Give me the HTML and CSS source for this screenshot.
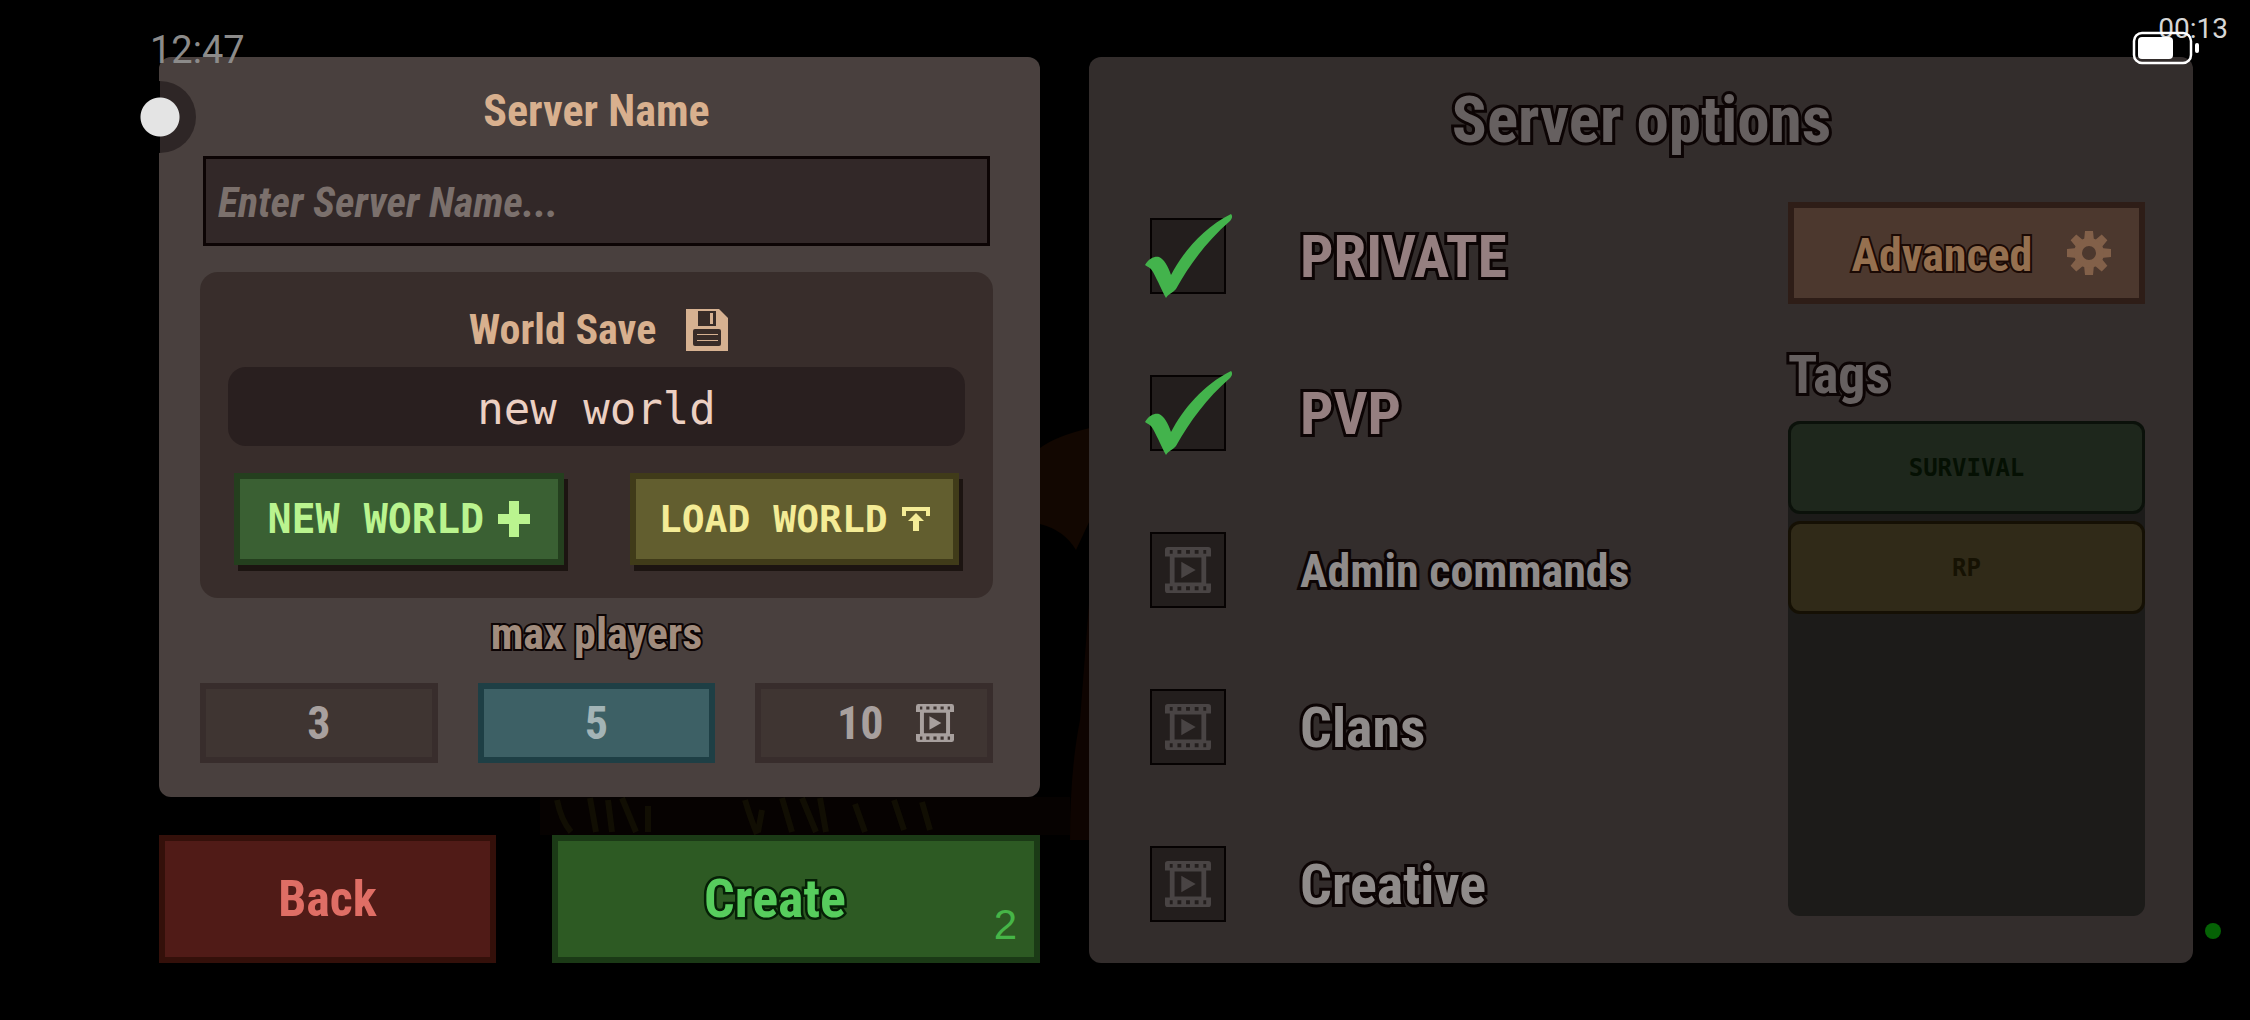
FILE: index.html
```html
<!DOCTYPE html>
<html lang="en">
<head>
  <meta charset="UTF-8">
  <title>Create Server</title>
  <link rel="stylesheet" href="styles.css">
</head>
<body>
  <svg class="symbols" width="0" height="0" aria-hidden="true">
    <symbol id="film" viewBox="0 0 48 48">
      <path fill="currentColor" fill-rule="evenodd" d="M3 0h42a3 3 0 0 1 3 3v7h-5v28h5v7a3 3 0 0 1-3 3H3a3 3 0 0 1-3-3v-7h5V10H0V3a3 3 0 0 1 3-3zM10 11v26h28V11zM5 3v4h3V3zM13 3v4h4V3zM22 3v4h4V3zM31 3v4h4V3zM40 3v4h3V3zM5 41v4h3v-4zM13 41v4h4v-4zM22 41v4h4v-4zM31 41v4h4v-4zM40 41v4h3v-4z"/>
      <path fill="currentColor" d="M17 15.500L32 24 17 32.500z"/>
    </symbol>
    <symbol id="check" viewBox="0 0 88 84">
      <path fill="#43b34c" d="M0 51C4 44 10 42 14 43C19 45 23 52 26 61C38 38 58 14 86 0C88 2 87 5 85 7C62 27 45 50 31 75C28 79 23 80 21 84C17 77 13 67 8 58C6 54 3 53 0 51z"/>
    </symbol>
  </svg>

  <svg class="scene" viewBox="0 0 2250 1020" preserveAspectRatio="none" aria-hidden="true">
    <path fill="#120701" d="M1040 448Q1056 436 1090 428V520L1076 550Q1064 530 1040 524z"/>
    <path fill="#0e0401" d="M1090 590V840H1070Q1070 770 1080 720z"/>
    <path fill="#060201" d="M540 797H1070V835H540z"/>
    <g fill="none" stroke="#110e03" stroke-width="6">
      <path d="M557 800q4 20 14 32M590 798l6 34M608 800l4 32M622 798l14 34M648 806v26"/>
      <path d="M745 800q6 20 12 34M762 810l-4 22M782 798l10 34M802 798l14 34M820 798l6 34M855 804l10 28M894 800l10 30M922 802l8 28"/>
    </g>
  </svg>

  <div class="screen">
    <div class="left">
      <section class="card server">
        <label class="title" for="server-name">Server Name</label>
        <input class="name-input" id="server-name" type="text" placeholder="Enter Server Name...">

        <div class="world">
          <div class="title world-title">
            World Save
            <svg class="disk" viewBox="0 0 42 42" aria-hidden="true">
              <path fill="#d6b191" d="M0 0H33L42 9V42H0z"/>
              <path fill="#382c28" fill-rule="evenodd" d="M12 2H30V17H12zM24 4V15H27V4z"/>
              <rect x="7" y="20" width="28" height="17" rx="2" fill="#382c28"/>
              <path stroke="#d6b191" stroke-width="1" d="M11 25.500H32M11 31.500H32"/>
            </svg>
          </div>
          <div class="slot">new world</div>
          <div class="world-buttons">
            <button class="btn new" type="button">NEW WORLD
              <svg width="32" height="36" viewBox="0 0 32 36" aria-hidden="true"><path fill="currentColor" d="M11 0H21V13H32V23H21V36H11V23H0V13H11z"/></svg>
            </button>
            <button class="btn load" type="button">LOAD WORLD
              <svg width="28" height="24" viewBox="0 0 28 24" aria-hidden="true"><path fill="currentColor" d="M0 0H28V9H24V4H4V9H0zM14 6L22 14H17V24H11V14H6z"/></svg>
            </button>
          </div>
        </div>

        <fieldset class="players">
          <legend class="outlined">max players</legend>
          <div class="player-row">
            <label class="player"><input type="radio" name="players" value="3"><span>3</span></label>
            <label class="player"><input type="radio" name="players" value="5" checked><span>5</span></label>
            <label class="player locked"><input type="radio" name="players" value="10"><span>10</span><svg class="film" aria-hidden="true"><use href="#film"/></svg></label>
          </div>
        </fieldset>
      </section>

      <div class="actions">
        <button class="btn back" type="button">Back</button>
        <button class="btn create" type="button"><span class="outlined">Create</span><span class="count">2</span></button>
      </div>
    </div>

    <section class="card options">
      <h1 class="outlined">Server options</h1>
      <div class="options-body">
        <div class="checks">
          <label class="check on"><span class="box"><input type="checkbox" checked><svg class="tick" aria-hidden="true"><use href="#check"/></svg></span><span class="outlined">PRIVATE</span></label>
          <label class="check on"><span class="box"><input type="checkbox" checked><svg class="tick" aria-hidden="true"><use href="#check"/></svg></span><span class="outlined">PVP</span></label>
          <label class="check small"><span class="box"><input type="checkbox"><svg class="film" aria-hidden="true"><use href="#film"/></svg></span><span class="outlined">Admin commands</span></label>
          <label class="check"><span class="box"><input type="checkbox"><svg class="film" aria-hidden="true"><use href="#film"/></svg></span><span class="outlined">Clans</span></label>
          <label class="check"><span class="box"><input type="checkbox"><svg class="film" aria-hidden="true"><use href="#film"/></svg></span><span class="outlined">Creative</span></label>
        </div>
        <div class="side">
          <button class="btn advanced" type="button"><span class="outlined">Advanced</span>
            <svg width="44" height="44" viewBox="-22 -22 44 44" aria-hidden="true">
              <g fill="#826049">
                <path id="teeth" d="M-4-22H4L5-12H-5zM-4 22H4L5 12H-5zM-22-4V4L-12 5V-5zM22-4V4L12 5V-5z"/>
                <use href="#teeth" transform="rotate(45)"/>
              </g>
              <circle r="11" fill="none" stroke="#826049" stroke-width="8"/>
            </svg>
          </button>
          <h2 class="outlined">Tags</h2>
          <div class="tags">
            <button class="tag survival" type="button">SURVIVAL</button>
            <button class="tag rp" type="button">RP</button>
          </div>
        </div>
      </div>
    </section>
  </div>

  <!-- phone overlay -->
  <div class="clock">12:47</div>
  <div class="touch"></div>
  <div class="timer">00:13</div>
  <svg class="battery" viewBox="0 0 68 34" aria-hidden="true">
    <rect x="2" y="2" width="57" height="30" rx="8" fill="none" stroke="#fff" stroke-width="2.500"/>
    <rect x="6" y="6" width="35" height="22" rx="4" fill="#fff"/>
    <rect x="63" y="12" width="4" height="10" rx="2" fill="#fff"/>
  </svg>
  <div class="dot"></div>
</body>
</html>
```
FILE: styles.css
```css
* { box-sizing: border-box; }
body { margin: 0; min-height: 100vh; position: relative; background: #000; font-family: "Roboto Condensed", Roboto, sans-serif; font-weight: bold; font-size: 46px; line-height: 52px; overflow: hidden; }
button, input { font: inherit; }
h1, h2, fieldset, legend { margin: 0; padding: 0; border: 0; font: inherit; }
.symbols { position: absolute; }
.scene { position: absolute; top: 0; left: 0; width: 100%; height: 100%; }

.screen { position: relative; display: grid; grid-template-columns: 881fr 1104fr; gap: 49px; padding: 57px 57px 57px 159px; }
.left { min-width: 0; display: flex; flex-direction: column; gap: 38px; }
.card { border-radius: 12px; }
.server { background: #49403e; padding: 28px 47px 34px 41px; display: flex; flex-direction: column; }
.outlined { -webkit-text-stroke: 4px #0c0404; paint-order: stroke fill; }

.title { color: #d8b08e; text-align: center; font-size: 44px; }
.name-input { height: 90px; margin: 19px 3px 26px; padding: 2px 12px 0; border: 3px solid #0c0404; border-radius: 0; background: #322828; color: #d8b08e; font-size: 42px; }
.name-input::placeholder { color: #7b706c; font-style: italic; opacity: 1; }

.world { background: #382d2b; border-radius: 18px; padding: 32px 28px 33px; }
.world-title { display: flex; justify-content: center; align-items: center; gap: 30px; padding-left: 4px; font-size: 42px; }
.disk { width: 42px; height: 42px; }
.slot { margin-top: 11px; height: 79px; border-radius: 18px; background: #291f1f; color: #ecd0c2; text-align: center; font: 44px/83px "DejaVu Sans Mono", monospace; }
.world-buttons { display: flex; gap: 66px; margin: 27px 6px 0; }
.btn { display: flex; align-items: center; justify-content: center; border: 6px solid; border-radius: 0; padding: 0; }
.world-buttons .btn { flex: 1; height: 92px; gap: 14px; font: bold 38px "DejaVu Sans Mono", monospace; box-shadow: 4px 6px 0 #1c1411; white-space: nowrap; }
.world-buttons .new { background: #3a6033; border-color: #243f1e; color: #baf48f; font-size: 40px; }
.load { background: #625e2f; border-color: #403b19; color: #f4ec96; }

.players { min-width: 0; }
.players legend { width: 100%; text-align: center; padding: 10px 0 23px; font-size: 44px; color: #a18c7d; }
.player-row { display: grid; grid-template-columns: repeat(3, 1fr); gap: 40px; }
.player { height: 80px; display: flex; align-items: center; justify-content: center; position: relative; background: #3f3532; border: 6px solid #382d2c; color: #a8a09e; }
.player input { position: absolute; opacity: 0; }
.player:has(input:checked) { background: #3d6065; border-color: #1e3f45; color: #a3b4b6; }
.locked { gap: 32px; padding-left: 44px; }
.film { width: 40px; height: 38px; color: #a8a09e; }

.actions { display: grid; grid-template-columns: 337fr 488fr; gap: 56px; }
.actions .btn { height: 128px; font-size: 50px; }
.back { background: #501b17; border-color: #34100a; color: #df6e65; }
.create { position: relative; padding-right: 42px; background: #2d5a23; border-color: #1b3a16; color: #57cd5d; }
.create .outlined { font-size: 54px; -webkit-text-stroke: 5px #062006; }
.count { position: absolute; right: 17px; bottom: 8px; font: 42px "Liberation Sans", sans-serif; color: #46b547; }

.options { min-width: 0; background: #332d2c; padding: 25px 48px 0 61px; }
.options h1 { text-align: center; padding-right: 12px; font-size: 65px; line-height: 76px; color: #666060; -webkit-text-stroke-width: 6px; }
.options-body { display: flex; justify-content: space-between; margin-top: 44px; }
.checks { display: flex; flex-direction: column; gap: 81px; padding-top: 16px; }
.check { display: flex; align-items: center; gap: 74px; height: 76px; font-size: 56px; color: #8f8b8a; }
.check .outlined { -webkit-text-stroke-width: 6px; padding-top: 2px; }
.on { font-size: 59px; color: #957f80; }
.small { font-size: 46px; }
.box { position: relative; width: 76px; height: 76px; display: flex; align-items: center; justify-content: center; }
.box input { appearance: none; position: absolute; inset: 0; margin: 0; border: 2px solid #060202; background: #231e1d; }
.box .film { position: relative; width: 50px; height: 46px; color: #494444; }
.tick { position: absolute; left: -5px; top: -4px; width: 88px; height: 84px; }

.side { width: 357px; }
.advanced { width: 100%; height: 102px; gap: 35px; padding-left: 30px; background: #4c382e; border-color: #2e1d17; color: #95704f; }
.advanced .outlined { padding-top: 4px; -webkit-text-stroke-color: #1b0a05; }
.side h2 { font-size: 54px; line-height: 60px; margin: 41px 0 16px; color: #666060; -webkit-text-stroke-width: 6px; }
.tags { height: 495px; border-radius: 12px; background: #1c1b19; display: flex; flex-direction: column; gap: 7px; }
.tag { height: 93px; border: 3px solid; border-radius: 12px; font: bold 24px "DejaVu Sans Mono", monospace; }
.survival { background: #1e271c; border-color: #0b110a; color: #051003; }
.rp { background: #302a18; border-color: #151004; color: #161203; }

.clock { position: absolute; left: 150px; top: 27px; font: 38px/46px Roboto, sans-serif; color: #8c8b8a; }
.timer { position: absolute; right: 22px; top: 12px; font: 28px/33px Roboto, sans-serif; color: #d6d6d6; }
.battery { position: absolute; right: 50px; top: 31px; width: 68px; height: 34px; }
.touch { position: absolute; left: 124px; top: 81px; width: 72px; height: 72px; border-radius: 50%; background: radial-gradient(circle, #e4e4e4 19px, transparent 20px), linear-gradient(90deg, #000 50%, #2e2626 50%); }
.dot { position: absolute; right: 29px; bottom: 81px; width: 16px; height: 16px; border-radius: 50%; background: #056205; }
```
